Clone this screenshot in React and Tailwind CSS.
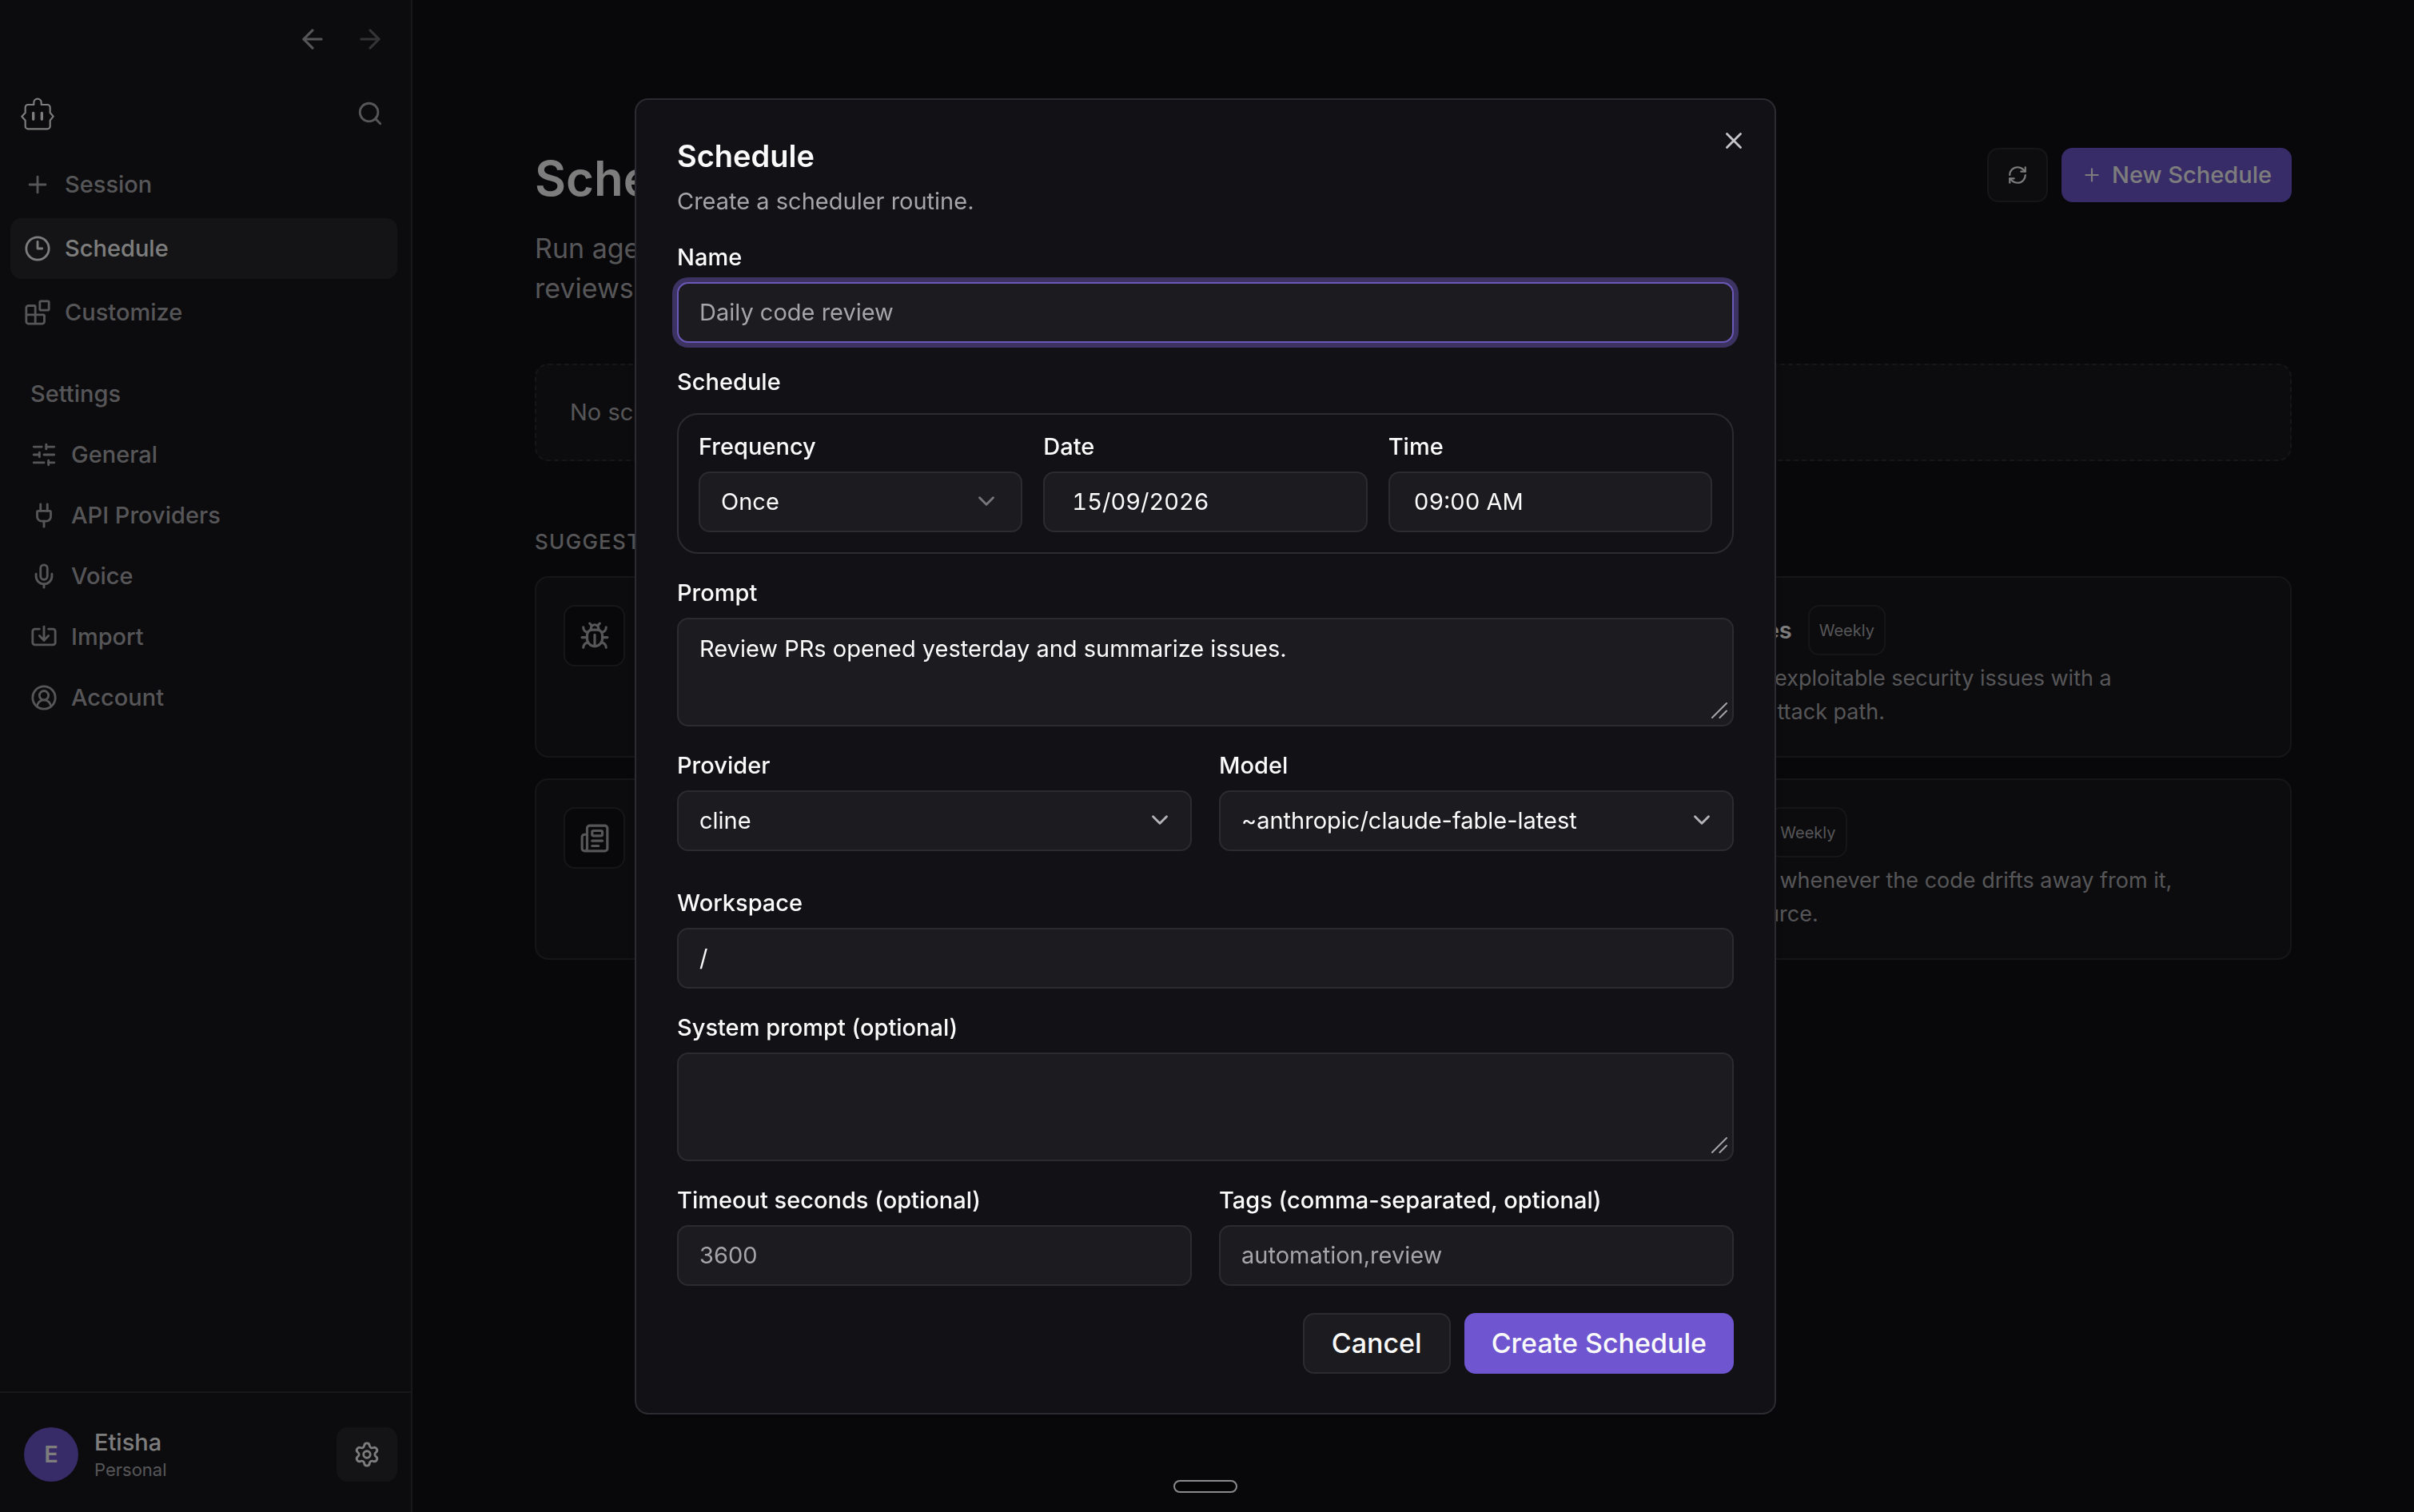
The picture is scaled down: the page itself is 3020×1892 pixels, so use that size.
import {
  ArrowLeft, ArrowRight, Search, Plus, Clock3, Blocks, SlidersHorizontal, Plug, Mic,
  Import, CircleUserRound, Settings, RefreshCw, Bug, Newspaper, ChevronDown, X,
} from "lucide-react";

const mainNav = [
  { label: "Session", icon: Plus },
  { label: "Schedule", icon: Clock3, active: true },
  { label: "Customize", icon: Blocks },
];

const settingsNav = [
  { label: "General", icon: SlidersHorizontal },
  { label: "API Providers", icon: Plug },
  { label: "Voice", icon: Mic },
  { label: "Import", icon: Import },
  { label: "Account", icon: CircleUserRound },
];

const suggestions = [
  { icon: Bug },
  {
    title: "Scan for vulnerabilities",
    cadence: "Weekly",
    lines: ["Scan the repository for exploitable security issues with a", "documented concrete attack path."],
  },
  { icon: Newspaper },
  {
    title: "Refresh documents",
    cadence: "Weekly",
    lines: ["Refresh the project doc whenever the code drifts away from it,", "and keep its trusted source."],
  },
];

function BotLogo() {
  return (
    <svg viewBox="18 27 126 123" className="h-[41px] w-[42px]" fill="none" stroke="currentColor" strokeWidth="6.5" strokeLinejoin="round" strokeLinecap="round" aria-hidden="true">
      <path d="M67 54V46a14 14 0 0 1 28 0V54H118a10 10 0 0 1 10 10V84L140 98L128 113V135a10 10 0 0 1-10 10H45a10 10 0 0 1-10-10V113L22 98L35 84V64a10 10 0 0 1 10-10Z" />
      <path d="M65 85V109M97 85V109" strokeWidth="10" />
    </svg>
  );
}

function Sidebar() {
  return (
    <aside className="flex w-[516px] shrink-0 flex-col border-r-2 border-[#313135] bg-[#18181c] text-[29px] font-medium text-[#acacb1]">
      <div className="flex justify-end gap-1 pt-[15px] pr-[17px]">
        <button type="button" aria-label="Back" className="flex h-17 w-17 items-center justify-center">
          <ArrowLeft size={38} />
        </button>
        <button type="button" aria-label="Forward" className="flex h-17 w-17 items-center justify-center text-[#69696d]">
          <ArrowRight size={38} />
        </button>
      </div>
      <div className="mt-[25px] flex h-17 items-center justify-between pr-[17px] pl-[26px]">
        <a href="#home" aria-label="Home" className="text-[#fafafa]"><BotLogo /></a>
        <button type="button" aria-label="Search" className="flex h-17 w-17 items-center justify-center">
          <Search size={34} />
        </button>
      </div>
      <nav aria-label="Main" className="mt-[17px] flex flex-col gap-1 pr-[17px] pl-[13px]">
        {mainNav.map(({ label, icon: Icon, active }) => (
          <a
            key={label}
            href={"#" + label.toLowerCase()}
            className={active
              ? "flex h-[76px] items-center gap-[17px] rounded-[14px] bg-[#29292c] px-[17px] text-[#fafafa]"
              : "flex h-[76px] items-center gap-[17px] rounded-[14px] px-[17px]"}
          >
            <Icon size={34} />
            {label}
          </a>
        ))}
      </nav>
      <nav aria-label="Settings" className="mt-[30px] pl-[38px]">
        <h2 className="flex h-[68px] items-center">Settings</h2>
        <div className="mt-1">
          {settingsNav.map(({ label, icon: Icon }) => (
            <a key={label} href={"#" + label.toLowerCase().replace(" ", "-")} className="flex h-[76px] items-center gap-[17px]">
              <Icon size={34} />
              {label}
            </a>
          ))}
        </div>
      </nav>
      <div className="mt-auto flex items-center border-t-2 border-[#313135] pt-[43px] pr-[17px] pb-[38px] pl-[30px]">
        <span className="flex h-17 w-17 items-center justify-center rounded-full bg-[#6f56d0] font-semibold text-[#fafafa]">E</span>
        <div className="ml-5">
          <p className="leading-[38px] text-[#fafafa]">Etisha</p>
          <p className="text-[22px] leading-[30px] font-normal">Personal</p>
        </div>
        <button type="button" aria-label="Settings" className="ml-auto flex h-17 w-[76px] items-center justify-center rounded-[14px] bg-[#29292c] text-[#fafafa]">
          <Settings size={34} />
        </button>
      </div>
    </aside>
  );
}

function SuggestionCard({ icon: Icon, title, cadence, lines }) {
  return (
    <article className="flex min-h-[227px] gap-[26px] rounded-[17px] border-2 border-[#2c2c31] bg-[#18181c] px-[34px] pt-[34px] pb-[30px]">
      <span className="flex h-[77px] w-[77px] shrink-0 items-center justify-center rounded-[14px] border-2 border-[#2c2c31] bg-[#111115]">
        {Icon && <Icon size={38} />}
      </span>
      {title && (
        <div className="whitespace-nowrap">
          <div className="flex items-center gap-5">
            <h3 className="text-[29px] font-semibold text-[#fafafa]">{title}</h3>
            <span className="flex h-[63px] items-center rounded-[14px] border-2 border-[#2c2c31] px-3 text-[20px]">{cadence}</span>
          </div>
          <p className="mt-2 text-[27px] leading-[42px]">
            {lines[0]}<br />{lines[1]}
          </p>
        </div>
      )}
    </article>
  );
}

function MainPage() {
  return (
    <main className="min-w-0 flex-1 px-[153px] pt-[185px] text-[#acacb1]">
      <header className="flex items-start justify-between">
        <div>
          <h1 className="text-[60px] leading-[76px] font-semibold text-[#fafafa]">Schedule</h1>
          <p className="mt-[25px] text-[34px] leading-[50px]">
            Run agents on a recurring basis for<br />reviews, reports and checks.
          </p>
        </div>
        <div className="flex gap-[17px]">
          <button type="button" aria-label="Refresh" className="flex h-17 w-[76px] items-center justify-center rounded-[14px] border-2 border-[#2c2c31] bg-[#1b1b1e] text-[#fafafa]">
            <RefreshCw size={26} />
          </button>
          <button type="button" className="flex h-17 items-center gap-3 rounded-[14px] bg-[#6f56d0] px-[25px] text-[29px] font-medium text-[#fafafa]">
            <Plus size={26} />
            New Schedule
          </button>
        </div>
      </header>
      <div className="mt-[69px] flex h-[122px] items-center rounded-[17px] border-2 border-dashed border-[#2c2c31] bg-[#18181c] px-[42px] text-[29px]">
        No schedules yet.
      </div>
      <h2 className="mt-[84px] text-[26px] leading-[34px] font-medium tracking-wider uppercase">Suggestions</h2>
      <section className="mt-[26px] grid grid-cols-2 gap-[26px]">
        {suggestions.map((item, i) => <SuggestionCard key={i} {...item} />)}
      </section>
    </main>
  );
}

const control = "h-[76px] w-full rounded-[14px] border-2 border-[#2c2b31] bg-[#1c1b1f] px-[26px] text-[29px] text-[#fafafa] outline-none placeholder:text-[#a5a5aa]";
const area = "block h-[136px] w-full resize-none rounded-[14px] border-2 border-[#2c2b31] bg-[#1c1b1f] px-[26px] py-[16px] text-[29px] leading-[42px] text-[#fafafa] outline-none";

function Field({ id, label, children }) {
  return (
    <div>
      <label htmlFor={id} className="mb-[17px] block text-[29px] leading-[29px] font-medium">{label}</label>
      {children}
    </div>
  );
}

function SelectField({ id, label, value, dim }) {
  return (
    <Field id={id} label={label}>
      <div className="relative">
        <select id={id} className={control + " appearance-none"}>
          <option>{value}</option>
        </select>
        <ChevronDown size={34} className={dim
          ? "pointer-events-none absolute top-[20px] right-7 text-[#77767b]"
          : "pointer-events-none absolute top-[20px] right-[23px] text-[#b4b4b8]"} />
      </div>
    </Field>
  );
}

function AreaField({ id, label, value }) {
  return (
    <Field id={id} label={label}>
      <div className="relative">
        <textarea id={id} defaultValue={value} className={area} />
        <svg viewBox="0 0 20 20" className="pointer-events-none absolute right-2 bottom-[10px] h-5 w-5" stroke="#a5a5a8" strokeWidth="2" strokeLinecap="round" aria-hidden="true">
          <path d="M1 19L19 1M10.500 19L19 10.500" />
        </svg>
      </div>
    </Field>
  );
}

function ScheduleDialog() {
  return (
    <div role="dialog" aria-modal="true" aria-labelledby="dialog-title" className="relative w-full max-w-[1428px] rounded-[17px] border-2 border-[#2c2b31] bg-[#121116] px-[51px] pt-[51px] pb-[49px] text-[#fafafa] shadow-lg">
      <button type="button" aria-label="Close" className="absolute top-[34px] right-[34px] flex text-[#c6c6c8]">
        <X size={34} />
      </button>
      <h2 id="dialog-title" className="text-[38px] leading-[38px] font-semibold">Schedule</h2>
      <p className="mt-[17px] text-[29px] leading-[42px] text-[#a5a5aa]">Create a scheduler routine.</p>
      <form className="mt-[34px] flex flex-col gap-[34px]">
        <Field id="name" label="Name">
          <input id="name" type="text" placeholder="Daily code review" className="h-[76px] w-full rounded-[14px] border-2 border-[#6b58b8] bg-[#1c1b1f] px-[26px] text-[29px] text-[#fafafa] ring-6 ring-[#3d3363] outline-none placeholder:text-[#a5a5aa]" />
        </Field>
        <fieldset>
          <legend className="mb-[25px] text-[29px] leading-[29px] font-medium">Schedule</legend>
          <div className="grid grid-cols-3 gap-[26px] rounded-[26px] border-2 border-[#2c2b31] p-[25px]">
            <SelectField id="frequency" label="Frequency" value="Once" dim />
            <Field id="date" label="Date">
              <input id="date" type="text" defaultValue="15/09/2026" className={control + " pl-[34px] tabular-nums"} />
            </Field>
            <Field id="time" label="Time">
              <input id="time" type="text" defaultValue="09:00 AM" className={control + " pl-[30px] tabular-nums"} />
            </Field>
          </div>
        </fieldset>
        <AreaField id="prompt" label="Prompt" value="Review PRs opened yesterday and summarize issues." />
        <div className="mb-4 grid grid-cols-2 gap-[34px]">
          <SelectField id="provider" label="Provider" value="cline" />
          <SelectField id="model" label="Model" value="~anthropic/claude-fable-latest" />
        </div>
        <Field id="workspace" label="Workspace">
          <input id="workspace" type="text" defaultValue="/" className={control} />
        </Field>
        <AreaField id="system-prompt" label="System prompt (optional)" value="" />
        <div className="grid grid-cols-2 gap-[34px]">
          <Field id="timeout" label="Timeout seconds (optional)">
            <input id="timeout" type="text" placeholder="3600" className={control} />
          </Field>
          <Field id="tags" label="Tags (comma-separated, optional)">
            <input id="tags" type="text" placeholder="automation,review" className={control} />
          </Field>
        </div>
        <div className="flex justify-end gap-[17px]">
          <button type="button" className="h-[76px] rounded-[14px] border-2 border-[#2c2b31] bg-[#1c1b1f] px-[34px] text-[34px] font-medium">Cancel</button>
          <button type="submit" className="h-[76px] rounded-[14px] bg-[#6f56d0] px-[34px] text-[34px] font-medium">Create Schedule</button>
        </div>
      </form>
    </div>
  );
}

export default function App() {
  return (
    <div className="font-['Inter',sans-serif]">
      <div className="flex h-screen overflow-hidden bg-[#111115]">
        <Sidebar />
        <MainPage />
      </div>
      <div className="fixed inset-0 flex items-center justify-center bg-black/50 pr-1">
        <ScheduleDialog />
      </div>
      <div className="fixed inset-x-0 bottom-6 flex justify-center pr-1">
        <div className="h-4 w-20 rounded-full border-2 border-[#8b8b8d] bg-[#050506]" />
      </div>
    </div>
  );
}
